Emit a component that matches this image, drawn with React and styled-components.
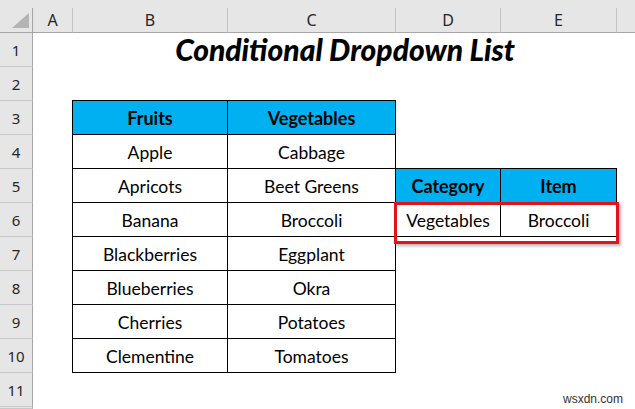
import styled, { createGlobalStyle } from "styled-components";

const GlobalStyle = createGlobalStyle`
    html, body {
        margin: 0;
        padding: 0;
        background: #ffffff;
    }
    * {
        box-sizing: border-box;
    }
`;

const letters = ["A", "B", "C", "D", "E", ""];
const rowNumbers = [1, 2, 3, 4, 5, 6, 7, 8, 9, 10, 11, 12];

const fruits = [
    ["Apple", "Cabbage"],
    ["Apricots", "Beet Greens"],
    ["Banana", "Broccoli"],
    ["Blackberries", "Eggplant"],
    ["Blueberries", "Okra"],
    ["Cherries", "Potatoes"],
    ["Clementine", "Tomatoes"],
];

export default function App() {
    return (
        <Sheet>
            <GlobalStyle />
            <TopStrip />
            <Corner>
                <CornerMark />
            </Corner>
            {letters.map((l, i) => (
                <ColHeader key={i} $last={i === letters.length - 1}>{l}</ColHeader>
            ))}
            {/* row 12 is only a sliver at the bottom edge, its number is not visible */}
            {rowNumbers.map((n) => (
                <RowHeader key={n} $row={n}>{n < 12 ? n : ""}</RowHeader>
            ))}

            <Title>Conditional Dropdown List</Title>

            <FruitTable>
                <HeadCell>Fruits</HeadCell>
                <HeadCell>Vegetables</HeadCell>
                {fruits.map(([f, v]) => [
                    <Cell key={f}>{f}</Cell>,
                    <Cell key={v}>{v}</Cell>,
                ])}
            </FruitTable>

            <PickTable>
                <HeadCell>Category</HeadCell>
                <HeadCell>Item</HeadCell>
                <Cell>Vegetables</Cell>
                <Cell>Broccoli</Cell>
                <Highlight />
            </PickTable>

            <Watermark>wsxdn.com</Watermark>
        </Sheet>
    );
}

const Sheet = styled.div`
    position: relative;
    width: 635px;
    height: 409px;
    overflow: hidden;
    display: grid;
    grid-template-columns: 33px 40px 155px 168px 105px 116px 1fr;
    grid-template-rows: 8px 25px repeat(11, 34px) 1fr;
    font-family: Lato, "Noto Sans", sans-serif;
    color: #000;
`;

const TopStrip = styled.div`
    grid-column: 1 / -1;
    grid-row: 1;
    background: #e6e6e6;
`;

const Corner = styled.div`
    grid-column: 1;
    grid-row: 2;
    background: #e6e6e6;
    border-right: 1px solid #a6a6a6;
    border-bottom: 1px solid #a6a6a6;
    display: flex;
    align-items: flex-end;
    justify-content: flex-end;
    padding: 0 3px 4px 0;
`;

const CornerMark = styled.div`
    width: 17px;
    height: 15px;
    background: #b4b4b4;
    clip-path: polygon(100% 0, 100% 100%, 0 100%);
`;

const ColHeader = styled.div`
    grid-row: 2;
    background: #e6e6e6;
    border-right: ${(p) => (p.$last ? "none" : "1px solid #c3c3c3")};
    border-bottom: 1px solid #a6a6a6;
    display: flex;
    align-items: center;
    justify-content: center;
    font-family: "Noto Sans", "Open Sans", sans-serif;
    font-size: 16px;
    color: #262626;
    padding-bottom: 1px;
`;

const RowHeader = styled.div`
    grid-column: 1;
    grid-row: ${(p) => p.$row + 2};
    background: #e6e6e6;
    border-right: 1px solid #a6a6a6;
    border-bottom: 1px solid #c8c8c8;
    display: flex;
    align-items: center;
    justify-content: center;
    font-family: "Noto Sans", "Open Sans", sans-serif;
    font-size: 15px;
    color: #262626;
`;

const Title = styled.h1`
    grid-column: 3 / 7;
    grid-row: 3;
    margin: 0;
    display: flex;
    align-items: center;
    justify-content: center;
    font-size: 30px;
    font-weight: 900;
    font-style: italic;
    padding-bottom: 3px;
`;

const Table = styled.div`
    display: grid;
    grid-auto-rows: 34px;
    margin: -1px 0 0 -1px;
    border-top: 1px solid #000;
    border-left: 1px solid #000;
    position: relative;
    align-self: start;
`;

const FruitTable = styled(Table)`
    grid-column: 3 / 5;
    grid-row: 5 / 13;
    grid-template-columns: 155px 168px;
`;

const PickTable = styled(Table)`
    grid-column: 5 / 7;
    grid-row: 7 / 9;
    grid-template-columns: 105px 116px;
`;

const Cell = styled.div`
    border-right: 1px solid #000;
    border-bottom: 1px solid #000;
    display: flex;
    align-items: center;
    justify-content: center;
    font-size: 17.5px;
    white-space: nowrap;
    padding-top: 1px;
`;

const HeadCell = styled(Cell)`
    background: #00b0f0;
    font-weight: 700;
    font-size: 18px;
`;

const Highlight = styled.div`
    position: absolute;
    left: -2px;
    top: 33px;
    width: 225px;
    height: 42px;
    border: 3px solid #e0141c;
    box-shadow: 2px 2px 3px rgba(0, 0, 0, 0.3);
    pointer-events: none;
`;

const Watermark = styled.div`
    position: absolute;
    right: 12px;
    bottom: 3px;
    font-family: "Liberation Sans", Arial, sans-serif;
    font-size: 12px;
    color: #333;
`;
